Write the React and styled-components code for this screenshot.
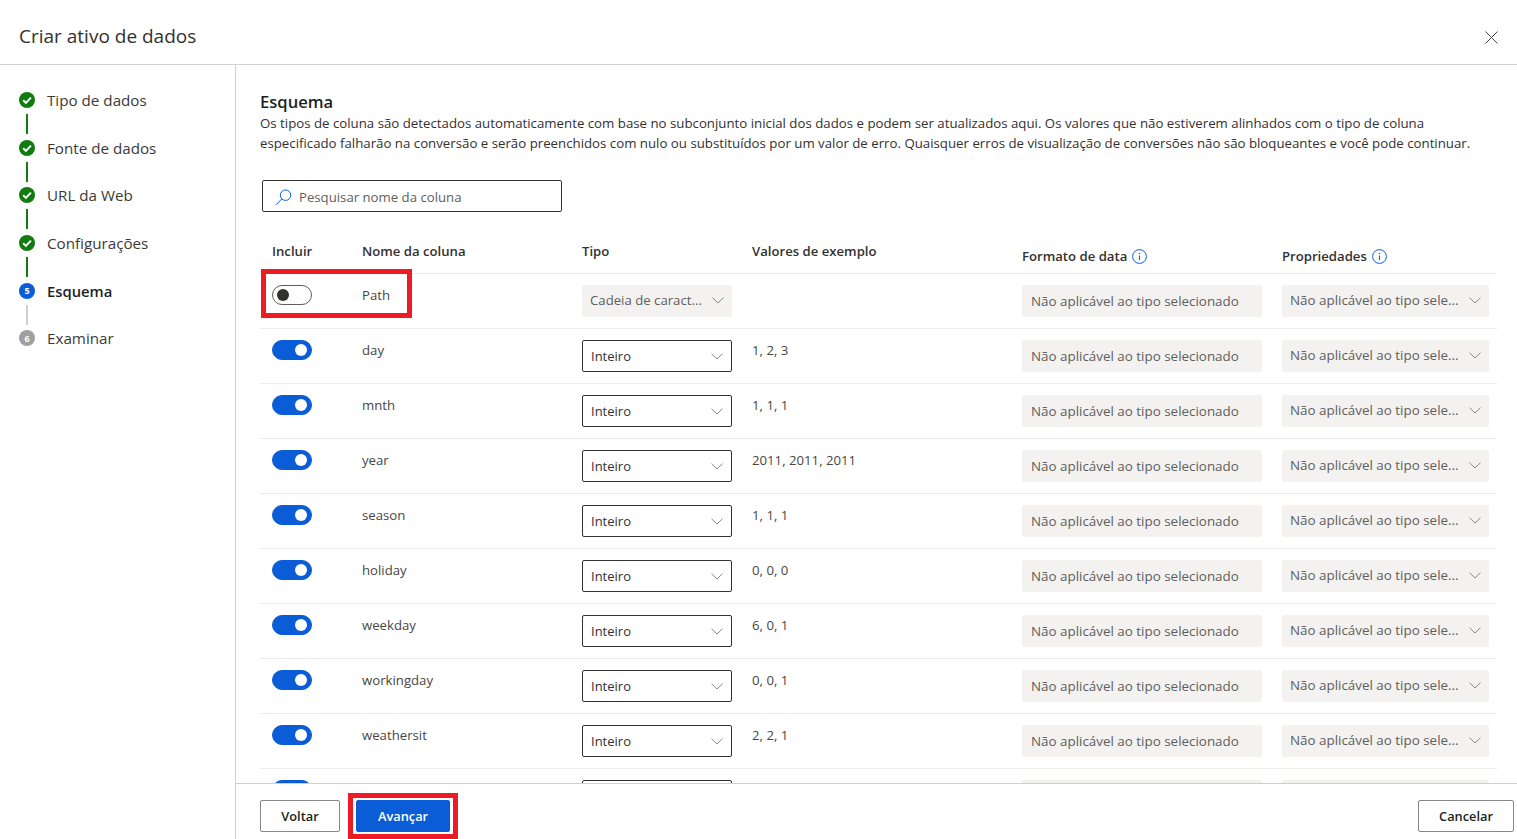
import React from "react";
import styled, { createGlobalStyle } from "styled-components";

const Global = createGlobalStyle`
  html, body {
    margin: 0;
    height: 100%;
    overflow: hidden;
    background: white;
  }
  body {
    font-family: "Open Sans", "Noto Sans", sans-serif;
    color: #323130;
  }
  * { box-sizing: border-box; }
`

const Page = styled.div`
  display: flex;
  flex-direction: column;
  width: 1517px;
  height: 839px;
`

const Header = styled.header`
  display: flex;
  justify-content: space-between;
  align-items: center;
  height: 65px;
  flex: none;
  padding: 7px 19px 0 19px;
  border-bottom: 1px solid #d2d0ce;
`

const Title = styled.h1`
  margin: 0;
  font-size: 19px;
  font-weight: 400;
  color: #323130;
`

const CloseButton = styled.button`
  display: flex;
  padding: 0;
  border: 0;
  background: none;
  margin-top: 3px;
`

const Body = styled.div`
  display: flex;
  flex: 1;
  min-height: 0;
`

const Nav = styled.nav`
  width: 236px;
  flex: none;
  padding: 26px 0 0 19px;
  border-right: 1px solid #d2d0ce;
`

const StepRow = styled.div`
  display: flex;
  align-items: center;
  gap: 12px;
  height: 18px;
  font-size: ${p => (p.$active ? 14.8 : 15.2)}px;
  font-weight: ${p => (p.$active ? 600 : 400)};
  color: ${p => (p.$active ? "#201f1e" : "#3b3a39")};
`

const Connector = styled.div`
  width: 2px;
  height: 20px;
  margin: 4.85px 0 4.85px 7px;
  background: ${p => (p.$done ? "#107c10" : "#d2d0ce")};
`

const StepNumber = styled.span`
  display: flex;
  align-items: center;
  justify-content: center;
  width: 16px;
  height: 16px;
  border-radius: 50%;
  font-size: 9px;
  font-weight: 700;
  color: white;
  background: ${p => (p.$active ? "#0b5cd7" : "#a19f9d")};
`

const Main = styled.main`
  display: flex;
  flex-direction: column;
  flex: 1;
  min-width: 0;
`

const Scroll = styled.div`
  flex: 1;
  min-height: 0;
  overflow: hidden;
  padding: 26px 20px 0 24px;
`

const Heading = styled.h2`
  margin: 0;
  font-size: 16.6px;
  line-height: 22px;
  font-weight: 600;
  color: #201f1e;
`

const Description = styled.p`
  margin: 0;
  font-size: 13.25px;
  line-height: 20px;
  color: #323130;
  white-space: nowrap;
`

const Search = styled.div`
  display: flex;
  align-items: center;
  gap: 7px;
  width: 300px;
  height: 32px;
  margin: 27px 0 0 2px;
  padding: 2px 0 0 12px;
  border: 1px solid #323130;
  border-radius: 2px;
  font-size: 13.2px;
  color: #605e5c;
`

const HeaderRow = styled.div`
  display: grid;
  grid-template-columns: 90px 220px 170px 270px 260px 207px;
  height: 62px;
  padding: 0 8px 0 12px;
  border-bottom: 1px solid #edebe9;
`

const HeaderCell = styled.div`
  display: flex;
  align-items: center;
  gap: 5px;
  height: 20px;
  margin-top: ${p => (p.$low ? 34 : 29)}px;
  font-size: 13.15px;
  font-weight: 600;
  color: #323130;
`

const Row = styled.div`
  position: relative;
  display: grid;
  grid-template-columns: 90px 220px 170px 270px 260px 207px;
  height: 55px;
  padding: 11px 8px 0 12px;
  border-bottom: 1px solid #edebe9;
`

const Toggle = styled.div`
  display: flex;
  align-items: center;
  justify-content: ${p => (p.$on ? "flex-end" : "flex-start")};
  width: 40px;
  height: 20px;
  padding: 0 4px;
  border-radius: 10px;
  border: 1px solid ${p => (p.$on ? "#0b5cd7" : "#605e5c")};
  background: ${p => (p.$on ? "#0b5cd7" : "white")};
`

const Knob = styled.span`
  width: 12px;
  height: 12px;
  border-radius: 50%;
  background: ${p => (p.$on ? "white" : "#323130")};
`

const CellText = styled.div`
  height: 20px;
  line-height: 20px;
  font-size: 13.2px;
  color: #484644;
`

const Select = styled.div`
  display: flex;
  align-items: center;
  justify-content: space-between;
  width: 150px;
  height: 32px;
  padding: 0 8px;
  border: 1px solid #323130;
  border-radius: 2px;
  font-size: 13px;
  color: #323130;
  background: white;
`

const DisabledSelect = styled.div`
  display: flex;
  align-items: center;
  justify-content: space-between;
  width: ${p => p.$width}px;
  height: 32px;
  padding: 0 8px 2px;
  border-radius: 2px;
  font-size: ${p => p.$size}px;
  color: #605e5c;
  background: #f3f2f1;
  white-space: nowrap;
`

const DisabledInput = styled.div`
  display: flex;
  align-items: center;
  width: 240px;
  height: 32px;
  padding: 0 0 0 9px;
  border-radius: 2px;
  font-size: 13.4px;
  color: #605e5c;
  background: #f3f2f1;
  white-space: nowrap;
`

const Highlight = styled.div`
  position: absolute;
  left: 1px;
  top: -5px;
  width: 151px;
  height: 49px;
  border: 5px solid #ed1c24;
  pointer-events: none;
`

const Footer = styled.footer`
  display: flex;
  align-items: flex-start;
  height: 56px;
  flex: none;
  padding: 16px 3px 0 24px;
  border-top: 1px solid #d2d0ce;
`

const Button = styled.button`
  width: ${p => p.$width}px;
  height: 32px;
  padding: 0;
  border: 1px solid ${p => (p.$primary ? "#0b5cd7" : "#8a8886")};
  border-radius: 2px;
  font-family: inherit;
  font-size: 12.8px;
  font-weight: 600;
  color: ${p => (p.$primary ? "white" : "#201f1e")};
  background: ${p => (p.$primary ? "#0b5cd7" : "white")};
`

const PrimaryWrap = styled.div`
  position: relative;
  margin-left: 16px;
`

const ButtonHighlight = styled.div`
  position: absolute;
  left: -8px;
  top: -7px;
  width: 110px;
  height: 46px;
  border: 5px solid #ed1c24;
  pointer-events: none;
`

const Spacer = styled.div`
  flex: 1;
`

const CheckIcon = () => (
  <svg width="16" height="16" viewBox="0 0 16 16">
    <circle cx="8" cy="8" r="8" fill="#107c10" />
    <path d="M4.2 8.3 L6.9 10.9 L11.9 5.6" fill="none" stroke="white" strokeWidth="2" />
  </svg>
)

const Chevron = () => (
  <svg width="12" height="7" viewBox="0 0 12 7">
    <path d="M0.5 0.7 L6 6 L11.5 0.7" fill="none" stroke="#8a8886" strokeWidth="1" />
  </svg>
)

const InfoIcon = () => (
  <svg width="15" height="15" viewBox="0 0 15 15">
    <circle cx="7.5" cy="7.5" r="6.9" fill="none" stroke="#0b5cd7" strokeWidth="1" />
    <path d="M7.5 6.5 V11" stroke="#0b5cd7" strokeWidth="1" />
    <circle cx="7.5" cy="4.4" r="0.7" fill="#0b5cd7" />
  </svg>
)

const SearchIcon = () => (
  <svg width="17" height="17" viewBox="0 0 17 17">
    <circle cx="10.5" cy="6.2" r="5.2" fill="none" stroke="#0b5cd7" strokeWidth="1" />
    <path d="M6.8 9.9 L1 15.8" fill="none" stroke="#0b5cd7" strokeWidth="1" />
  </svg>
)

const CloseIcon = () => (
  <svg width="13" height="13" viewBox="0 0 13 13">
    <path d="M0.5 0.5 L12.5 12.5 M12.5 0.5 L0.5 12.5" stroke="#484644" strokeWidth="1" />
  </svg>
)

const steps = [
  { label: "Tipo de dados", done: true },
  { label: "Fonte de dados", done: true },
  { label: "URL da Web", done: true },
  { label: "Configurações", done: true },
  { label: "Esquema", number: 5, active: true },
  { label: "Examinar", number: 6 },
]

const rows = [
  { name: "Path", on: false, sample: "" },
  { name: "day", on: true, sample: "1, 2, 3" },
  { name: "mnth", on: true, sample: "1, 1, 1" },
  { name: "year", on: true, sample: "2011, 2011, 2011" },
  { name: "season", on: true, sample: "1, 1, 1" },
  { name: "holiday", on: true, sample: "0, 0, 0" },
  { name: "weekday", on: true, sample: "6, 0, 1" },
  { name: "workingday", on: true, sample: "0, 0, 1" },
  { name: "weathersit", on: true, sample: "2, 2, 1" },
]

const App = () => {
  return (
    <Page>
      <Global />
      <Header>
        <Title>Criar ativo de dados</Title>
        <CloseButton><CloseIcon /></CloseButton>
      </Header>
      <Body>
        <Nav>
          {steps.map((step, i) => (
            <div key={step.label}>
              <StepRow $active={step.active}>
                {step.done ? <CheckIcon /> : <StepNumber $active={step.active}>{step.number}</StepNumber>}
                {step.label}
              </StepRow>
              {i < steps.length - 1 && <Connector $done={step.done} />}
            </div>
          ))}
        </Nav>
        <Main>
          <Scroll>
            <Heading>Esquema</Heading>
            <Description>Os tipos de coluna são detectados automaticamente com base no subconjunto inicial dos dados e podem ser atualizados aqui. Os valores que não estiverem alinhados com o tipo de coluna</Description>
            <Description>especificado falharão na conversão e serão preenchidos com nulo ou substituídos por um valor de erro. Quaisquer erros de visualização de conversões não são bloqueantes e você pode continuar.</Description>
            <Search><SearchIcon />Pesquisar nome da coluna</Search>
            <HeaderRow>
              <HeaderCell>Incluir</HeaderCell>
              <HeaderCell>Nome da coluna</HeaderCell>
              <HeaderCell>Tipo</HeaderCell>
              <HeaderCell>Valores de exemplo</HeaderCell>
              <HeaderCell $low>Formato de data <InfoIcon /></HeaderCell>
              <HeaderCell $low>Propriedades <InfoIcon /></HeaderCell>
            </HeaderRow>
            {rows.map(row => (
              <Row key={row.name}>
                <Toggle $on={row.on}><Knob $on={row.on} /></Toggle>
                <CellText>{row.name}</CellText>
                {row.on ? (
                  <Select>Inteiro <Chevron /></Select>
                ) : (
                  <DisabledSelect $width={150} $size={13.2}>Cadeia de caract... <Chevron /></DisabledSelect>
                )}
                <CellText>{row.sample}</CellText>
                <DisabledInput>Não aplicável ao tipo selecionado</DisabledInput>
                <DisabledSelect $width={207} $size={13.4}>Não aplicável ao tipo sele... <Chevron /></DisabledSelect>
                {!row.on && <Highlight />}
              </Row>
            ))}
            {/* the next row is only just visible above the footer */}
            <Row>
              <Toggle $on><Knob $on /></Toggle>
              <div />
              <Select />
              <div />
              <DisabledInput />
              <DisabledSelect $width={207} />
            </Row>
          </Scroll>
          <Footer>
            <Button $width={80}>Voltar</Button>
            <PrimaryWrap>
              <Button $primary $width={94}>Avançar</Button>
              <ButtonHighlight />
            </PrimaryWrap>
            <Spacer />
            <Button $width={96}>Cancelar</Button>
          </Footer>
        </Main>
      </Body>
    </Page>
  )
}

export default App
